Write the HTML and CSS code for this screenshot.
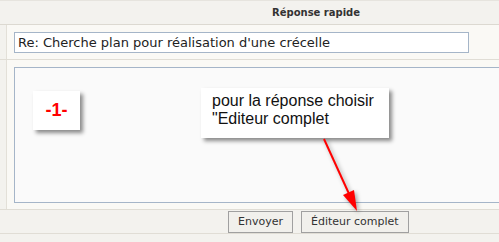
FILE: index.html
```html
<!DOCTYPE html>
<html>
<head>
  <meta charset="UTF-8">
  <title>Réponse rapide</title>
  <link rel="stylesheet" href="styles.css">
</head>
<body>

  <div class="page">
    <div class="head">Réponse rapide</div>

    <div class="row">
      <div class="side"></div>
      <div class="cell subject-cell">
        <div class="subject">Re: Cherche plan pour réalisation d'une crécelle</div>
      </div>
    </div>

    <div class="row">
      <div class="side"></div>
      <div class="cell message-cell">
        <div class="message">
          <div class="note note-num">-1-</div>
          <div class="note note-text">pour la réponse choisir<br>"Editeur complet</div>
        </div>
      </div>
    </div>

    <div class="actions">
      <button class="btn">Envoyer</button>
      <button class="btn">Éditeur complet</button>
    </div>

    <svg class="arrow" width="499" height="242" viewBox="0 0 499 242">
      <line x1="324" y1="139" x2="350" y2="196" stroke="#ff0000" stroke-width="2"/>
      <polygon points="357,211 343,195 354,190" fill="#ff0000"/>
    </svg>
  </div>

</body>
</html>
```

FILE: styles.css
```css
body {
  margin: 0;
  font-family: "DejaVu Sans", Verdana, sans-serif;
}

.page {
  position: relative;
  width: 499px;
  height: 242px;
  background-color: #f3f2ee;
  overflow: hidden;
}

.head {
  height: 23px;
  border-top: 1px solid #e6e4de;
  border-bottom: 1px solid #dcd9d1;
  display: flex;
  align-items: center;
  padding-left: 272px;
  font-size: 10px;
  font-weight: bold;
  color: #333;
}

.row {
  display: flex;
  border-bottom: 1px solid #e0ddd5;
}

.side {
  width: 6px;
  border-right: 1px solid #e3e0d8;
  background-color: #f3f2ee;
}

.cell {
  flex: 1;
  min-width: 0;
  background-color: #faf9f5;
  overflow: hidden;
}

.subject-cell {
  height: 27px;
  padding: 7px 0 0 7px;
}

.subject {
  width: 450px;
  height: 19px;
  border: 1px solid #a5b5c8;
  background: white;
  font-size: 13px;
  line-height: 19px;
  padding-left: 3px;
  color: #222;
}

.message-cell {
  height: 142px;
  padding: 7px 0 0 7px;
}

.message {
  position: relative;
  width: 520px;
  flex-shrink: 0;
  height: 134px;
  border: 1px solid #a5b5c8;
  border-right: none;
  background-color: #fafafa;
}

.note {
  position: absolute;
  background: white;
  box-shadow: 3px 3px 4px rgba(0,0,0,0.45);
  font-family: "Liberation Sans", Arial, sans-serif;
}

.note-num {
  left: 18px;
  top: 23px;
  width: 47px;
  height: 39px;
  display: flex;
  align-items: center;
  justify-content: center;
  color: #ff0000;
  font-weight: bold;
  font-size: 18px;
}

.note-text {
  left: 186px;
  top: 20px;
  width: 177px;
  height: 46px;
  padding: 4px 0 0 11px;
  font-size: 16px;
  line-height: 18px;
  color: #111;
}

.actions {
  height: 23px;
  border-bottom: 1px solid #e0ddd5;
  display: flex;
  align-items: center;
  gap: 8px;
  padding-left: 228px;
}

.btn {
  height: 22px;
  padding: 0 9px;
  border: 1px solid #a0a0a0;
  background-color: #f1f0ec;
  font-family: "DejaVu Sans", Verdana, sans-serif;
  font-size: 11px;
  color: #333;
}

.arrow {
  position: absolute;
  left: 0;
  top: 0;
  pointer-events: none;
  filter: drop-shadow(2px 2px 2px rgba(0,0,0,0.35));
}
```
